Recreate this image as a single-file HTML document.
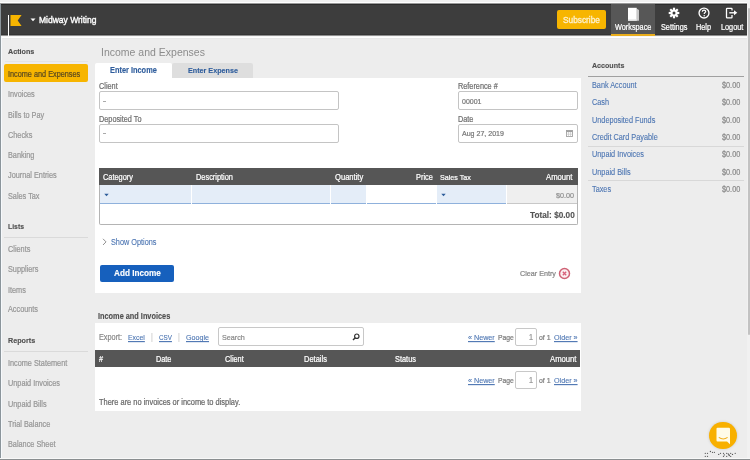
<!DOCTYPE html>
<html><head><meta charset="utf-8">
<style>
*{box-sizing:border-box;margin:0;padding:0}
html,body{width:750px;height:460px;overflow:hidden}
body{position:relative;background:#ededed;font-family:"Liberation Sans",sans-serif;font-size:7.3px;line-height:10px;color:#555}
.a{position:absolute;white-space:nowrap}
.t{position:absolute;white-space:nowrap;font-size:7.3px;line-height:10px;height:10px;margin-top:1.3px;transform:scaleY(1.12);transform-origin:0 7.6px;will-change:transform;-webkit-text-stroke:0.2px currentColor}
.b{font-weight:bold;-webkit-text-stroke:0.12px currentColor}
.si{color:#979797;left:8px}
.sh{color:#505050;font-weight:bold;font-size:7.2px;left:8px;-webkit-text-stroke:0.12px currentColor}
.w{color:#fff}
.lk{color:#4c75b2;-webkit-text-stroke:0.1px currentColor}
.ul{text-decoration:underline;text-decoration-thickness:0.6px;text-underline-offset:1.2px}
.inp{position:absolute;border:1px solid #c4c4c4;border-radius:2px;background:#fff}
.r{text-align:right}
.amt{color:#8a8a8a;right:10px;text-align:right}
</style></head><body>
<!-- top strip / header -->
<div class="a" style="left:0;top:0;width:750px;height:2px;background:#f1f1f1"></div>
<div class="a" style="left:0;top:2px;width:750px;height:1px;background:#fff"></div>
<div class="a" style="left:0;top:3px;width:750px;height:1px;background:#9a9a9a"></div>
<div class="a" style="left:0;top:4px;width:747px;height:31px;background:#3d3d3d"></div>
<div class="a" style="left:0;top:4px;width:747px;height:1px;background:#2c2c2c"></div>
<div class="a" style="left:0;top:34px;width:747px;height:1px;background:#353535"></div>
<div class="a" style="left:0;top:35px;width:750px;height:1px;background:#8f8f8f"></div>
<div class="a" style="left:0;top:36px;width:750px;height:1px;background:#f6f6f6"></div>
<div class="a" style="left:0;top:37px;width:750px;height:1px;background:#fff"></div>
<div class="a" style="left:0;top:38px;width:750px;height:1px;background:#e8e8e8"></div>
<!-- right edge strip -->
<div class="a" style="left:747px;top:0;width:3px;height:459px;background:#f1f1f1"></div>
<div class="a" style="left:748px;top:8px;width:2px;height:327px;background:#c2c2c2;border-radius:1px"></div>
<!-- left edge line -->
<div class="a" style="left:0;top:4px;width:1px;height:455px;background:#8b959b"></div>
<div class="a" style="left:1px;top:36px;width:1px;height:422px;background:#f6f9fc"></div>
<!-- bottom line -->
<div class="a" style="left:0;top:458px;width:750px;height:1px;background:#f8f8f8"></div>
<div class="a" style="left:0;top:459px;width:750px;height:1px;background:#8a8e90"></div>

<!-- logo -->
<div class="a" style="left:7.5px;top:15px;width:1.7px;height:20.5px;background:#fff"></div>
<svg class="a" style="left:10px;top:14px" width="13" height="13" viewBox="0 0 13 13"><path d="M0.5 0.9H11.6L7.7 6.5L11.6 12H0.5Z" fill="#f7b500"/></svg>
<svg class="a" style="left:30px;top:18px" width="6" height="4" viewBox="0 0 6 4"><path d="M0.5 0.5H5.5L3 3.3Z" fill="#fff"/></svg>
<div class="t w" style="left:39px;top:13.8px;font-size:8.5px;-webkit-text-stroke:0.35px #fff">Midway Writing</div>

<!-- subscribe -->
<div class="a" style="left:557px;top:10px;width:49px;height:19px;background:#f7b500;border-radius:2px"></div>
<div class="t" style="left:562.5px;top:13.4px;font-size:8.3px;color:#fdf0cc;-webkit-text-stroke:0.3px #fdf0cc">Subscribe</div>
<!-- workspace tab -->
<div class="a" style="left:611px;top:4px;width:44px;height:31px;background:#575757"></div>
<div class="a" style="left:611px;top:34px;width:44px;height:2px;background:#e9ad1c"></div>
<svg class="a" style="left:626px;top:7px" width="14" height="15" viewBox="0 0 14 15"><path d="M10.5 1.5L13 3V13.7L10.5 13.7Z" fill="#c9c9c9"/><path d="M2 0.8H10.7V13.7H2Z" fill="#fff"/><path d="M2 12.3H10.7V13.7H2Z" fill="#e6e6e6"/></svg>
<div class="t w" style="left:615px;top:21.3px">Workspace</div>
<!-- settings gear -->
<svg class="a" style="left:668px;top:7.2px" width="12" height="12" viewBox="0 0 12 12">
<g fill="#fff" transform="translate(6 6)">
<circle r="3.6"/>
<rect x="-1.1" y="-5.3" width="2.2" height="10.6"/>
<rect x="-1.1" y="-5.3" width="2.2" height="10.6" transform="rotate(45)"/>
<rect x="-1.1" y="-5.3" width="2.2" height="10.6" transform="rotate(90)"/>
<rect x="-1.1" y="-5.3" width="2.2" height="10.6" transform="rotate(135)"/>
</g><circle cx="6" cy="6" r="1.5" fill="#3d3d3d"/></svg>
<div class="t w" style="left:661px;top:21.3px">Settings</div>
<!-- help -->
<svg class="a" style="left:697.7px;top:6.7px" width="12" height="12" viewBox="0 0 12 12"><circle cx="6" cy="6" r="4.95" fill="none" stroke="#fff" stroke-width="1.35"/><path d="M4.3 4.7C4.3 3.6 5 3.1 6 3.1C7 3.1 7.7 3.7 7.7 4.5C7.7 5.5 6.2 5.6 6.2 6.9" fill="none" stroke="#fff" stroke-width="1.2"/><circle cx="6.2" cy="8.7" r="0.75" fill="#fff"/></svg>
<div class="t w" style="left:696px;top:21.3px">Help</div>
<!-- logout -->
<svg class="a" style="left:725px;top:7px" width="14" height="12" viewBox="0 0 14 12"><path d="M7 3.6V1.9Q7 1.3 6.4 1.3H2.1Q1.5 1.3 1.5 1.9V10.3Q1.5 10.9 2.1 10.9H6.4Q7 10.9 7 10.3V8" fill="none" stroke="#fff" stroke-width="1.3"/><path d="M4.3 5.8H9.6" stroke="#fff" stroke-width="1.4"/><path d="M9 3.3L12.3 5.8L9 8.3Z" fill="#fff"/></svg>
<div class="t w" style="left:720.5px;top:21.3px">Logout</div>

<!-- sidebar -->
<div class="t sh" style="top:45.8px">Actions</div>
<div class="a" style="left:5px;top:61px;width:83px;height:1px;background:#e4e4e4"></div>
<div class="a" style="left:4px;top:64px;width:84px;height:18px;background:#f7b500;border-radius:2px"></div>
<div class="t" style="left:8px;top:69px;color:#5b4a1f">Income and Expenses</div>
<div class="t si" style="top:89.2px">Invoices</div>
<div class="t si" style="top:109.3px">Bills to Pay</div>
<div class="t si" style="top:129.7px">Checks</div>
<div class="t si" style="top:149.8px">Banking</div>
<div class="t si" style="top:170.2px">Journal Entries</div>
<div class="t si" style="top:190.5px">Sales Tax</div>
<div class="t sh" style="top:221.2px;font-size:6.9px">Lists</div>
<div class="a" style="left:4px;top:237px;width:84px;height:1px;background:#dadada"></div>
<div class="t si" style="top:243.6px">Clients</div>
<div class="t si" style="top:264.1px">Suppliers</div>
<div class="t si" style="top:284.5px">Items</div>
<div class="t si" style="top:304.1px">Accounts</div>
<div class="t sh" style="top:334.4px">Reports</div>
<div class="a" style="left:4px;top:351px;width:84px;height:1px;background:#dadada"></div>
<div class="t si" style="top:357.5px">Income Statement</div>
<div class="t si" style="top:378px">Unpaid Invoices</div>
<div class="t si" style="top:398.6px">Unpaid Bills</div>
<div class="t si" style="top:418.4px">Trial Balance</div>
<div class="t si" style="top:439px">Balance Sheet</div>

<!-- main title -->
<div class="t" style="left:100.5px;top:43.4px;font-size:10.5px;line-height:14px;height:14px;color:#8c8c8c;-webkit-text-stroke:0">Income and Expenses</div>
<!-- tabs -->
<div class="a" style="left:95px;top:62.7px;width:76.5px;height:16px;background:#fff;border-radius:2px 2px 0 0"></div>
<div class="a" style="left:171.8px;top:62.7px;width:81.2px;height:15.3px;background:#dedede;border-radius:2px 2px 0 0"></div>
<div class="t b" style="left:110px;top:64.5px;font-size:7.4px;color:#2f5d9c">Enter Income</div>
<div class="t b" style="left:188px;top:64.5px;font-size:7.2px;color:#2f5d9c">Enter Expense</div>
<div class="a" style="left:95px;top:78px;width:486px;height:214.7px;background:#fff"></div>

<div class="t" style="left:99px;top:80.8px;color:#707070">Client</div>
<div class="inp" style="left:98.5px;top:91px;width:240px;height:19px"></div>
<div class="a" style="left:103px;top:100.5px;width:3px;height:1px;background:#aaa"></div>
<div class="t" style="left:99px;top:113.6px;color:#707070">Deposited To</div>
<div class="inp" style="left:98.5px;top:123.5px;width:240px;height:19px"></div>
<div class="a" style="left:103px;top:133px;width:3px;height:1px;background:#aaa"></div>
<div class="t" style="left:458px;top:80.8px;color:#707070">Reference #</div>
<div class="inp" style="left:457.5px;top:91px;width:120px;height:19px"></div>
<div class="t" style="left:462px;top:95.9px;color:#777;font-size:7px">00001</div>
<div class="t" style="left:458px;top:113.6px;color:#707070">Date</div>
<div class="inp" style="left:457.5px;top:123.5px;width:120px;height:19px"></div>
<div class="t" style="left:462px;top:127.9px;color:#777;font-size:7.06px">Aug 27, 2019</div>
<svg class="a" style="left:565.5px;top:130px" width="7" height="7" viewBox="0 0 7 7"><rect x="0.5" y="0.5" width="6" height="6" fill="none" stroke="#a0a0a0" stroke-width="0.9"/><rect x="0.5" y="0.5" width="6" height="1.6" fill="#a0a0a0"/><path d="M0.5 4.2H6.5M2.5 2V6.5M4.5 2V6.5" stroke="#bdbdbd" stroke-width="0.6"/></svg>

<!-- entry table -->
<div class="a" style="left:99px;top:167.5px;width:478.5px;height:57px;border:1px solid #b4b4b4;border-top:none;border-radius:0 0 2px 2px;background:#fff"></div>
<div class="a" style="left:99px;top:167.5px;width:478.5px;height:17px;background:#565656"></div>
<div class="t w" style="left:103px;top:171.3px;font-size:7.4px">Category</div>
<div class="t w" style="left:195.5px;top:171.3px;font-size:7.4px">Description</div>
<div class="t w" style="left:334.5px;top:171.3px;font-size:7.6px">Quantity</div>
<div class="t w" style="left:415.8px;top:171.3px;font-size:7.4px">Price</div>
<div class="t w" style="left:439.5px;top:171.3px;font-size:7.15px">Sales Tax</div>
<div class="t w" style="left:546.3px;top:171.3px;font-size:7.7px">Amount</div>

<div class="a" style="left:100px;top:185px;width:91px;height:18.5px;background:#e4edf8;border-bottom:1px solid #8fb1dc"></div>
<div class="a" style="left:192px;top:185px;width:138px;height:18.5px;background:#e4edf8;border-bottom:1px solid #8fb1dc"></div>
<div class="a" style="left:331px;top:185px;width:35px;height:18.5px;background:#e4edf8;border-bottom:1px solid #8fb1dc"></div>
<div class="a" style="left:367px;top:185px;width:69px;height:18.5px;background:#fff;border-bottom:1px solid #8fb1dc"></div>
<div class="a" style="left:437px;top:185px;width:69px;height:18.5px;background:#e4edf8;border-bottom:1px solid #8fb1dc"></div>
<div class="a" style="left:507px;top:185px;width:69.5px;height:18.5px;background:#efefef;border-bottom:1px solid #c8c8c8"></div>
<svg class="a" style="left:104px;top:193px" width="5" height="4" viewBox="0 0 5 4"><path d="M0.3 0.8H4.7L2.5 3.2Z" fill="#2c5c9a"/></svg>
<svg class="a" style="left:441px;top:193px" width="5" height="4" viewBox="0 0 5 4"><path d="M0.3 0.8H4.7L2.5 3.2Z" fill="#2c5c9a"/></svg>
<div class="t" style="left:555.8px;top:189.9px;color:#8e8e8e;font-size:7.2px">$0.00</div>
<div class="t b" style="left:529.8px;top:209.5px;color:#555;font-size:8.25px">Total: $0.00</div>

<svg class="a" style="left:102px;top:238.3px" width="5" height="8" viewBox="0 0 5 8"><path d="M1 0.8L4 3.9L1 7" fill="none" stroke="#858585" stroke-width="0.9"/></svg>
<div class="t lk" style="left:110.5px;top:237px">Show Options</div>
<div class="a" style="left:100px;top:264.5px;width:74px;height:17px;background:#1660bd;border-radius:2px"></div>
<div class="t b w" style="left:113.8px;top:268.1px;font-size:8.2px">Add Income</div>
<div class="t" style="left:520px;top:267.6px;color:#858585;font-size:7.2px">Clear Entry</div>
<svg class="a" style="left:558px;top:267px" width="13" height="13" viewBox="0 0 13 13"><circle cx="6.5" cy="6.5" r="5" fill="#fbeef0" stroke="#cf6275" stroke-width="1.5"/><path d="M4.8 4.8L8.2 8.2M8.2 4.8L4.8 8.2" stroke="#d9607a" stroke-width="1.3"/></svg>

<!-- accounts panel -->
<div class="t sh" style="left:592.3px;top:59.7px;font-size:7.1px">Accounts</div>
<div class="a" style="left:588px;top:75.5px;width:156px;height:1.5px;background:#a0a0a0"></div>
<div class="t lk" style="left:592.3px;top:80.1px">Bank Account</div>
<div class="t amt" style="top:80.1px">$0.00</div>
<div class="t lk" style="left:592.3px;top:97px">Cash</div>
<div class="t amt" style="top:97px">$0.00</div>
<div class="t lk" style="left:592.3px;top:114.4px">Undeposited Funds</div>
<div class="t amt" style="top:114.4px">$0.00</div>
<div class="t lk" style="left:592.3px;top:131.3px">Credit Card Payable</div>
<div class="t amt" style="top:131.3px">$0.00</div>
<div class="a" style="left:588px;top:145.5px;width:156px;height:1px;background:#d8d8d8"></div>
<div class="t lk" style="left:592.3px;top:149.2px">Unpaid Invoices</div>
<div class="t amt" style="top:149.2px">$0.00</div>
<div class="t lk" style="left:592.3px;top:166.4px">Unpaid Bills</div>
<div class="t amt" style="top:166.4px">$0.00</div>
<div class="a" style="left:588px;top:179.5px;width:156px;height:1px;background:#d8d8d8"></div>
<div class="t lk" style="left:592.3px;top:183.6px">Taxes</div>
<div class="t amt" style="top:183.6px">$0.00</div>

<!-- income and invoices -->
<div class="t sh" style="left:98.4px;top:311.2px;font-size:7.35px">Income and Invoices</div>
<div class="a" style="left:95px;top:323px;width:486px;height:87.5px;background:#fff"></div>
<div class="t" style="left:99px;top:331.8px;color:#8a8a8a">Export:</div>
<div class="t lk ul" style="left:128px;top:331.8px;font-size:6.9px">Excel</div>
<div class="t" style="left:150.5px;top:331.8px;color:#bbb;-webkit-text-stroke:0">|</div>
<div class="t lk ul" style="left:159px;top:331.8px;font-size:6.3px">CSV</div>
<div class="t" style="left:177.5px;top:331.8px;color:#bbb;-webkit-text-stroke:0">|</div>
<div class="t lk ul" style="left:186px;top:331.8px;font-size:7.15px">Google</div>
<div class="inp" style="left:218px;top:327px;width:146px;height:19px;border-color:#c8c8c8"></div>
<div class="t" style="left:222px;top:331.6px;color:#8a8a8a;font-size:7.2px">Search</div>
<svg class="a" style="left:352px;top:332.5px" width="8" height="8" viewBox="0 0 8 8"><circle cx="4.8" cy="3.2" r="2.2" fill="none" stroke="#333" stroke-width="1.2"/><path d="M3.3 4.7L1 7" stroke="#333" stroke-width="1.4"/></svg>
<div class="t lk ul" style="left:468.4px;top:332.2px;font-size:7.2px">« Newer</div>
<div class="t" style="left:497.6px;top:332.2px;color:#7d7d7d;font-size:6.8px">Page</div>
<div class="inp" style="left:515px;top:327.5px;width:22px;height:18.5px;border-color:#c8c8c8"></div>
<div class="t" style="left:529px;top:332.2px;color:#999">1</div>
<div class="t" style="left:539px;top:332.2px;color:#7d7d7d;font-size:6.95px">of 1</div>
<div class="t lk ul" style="left:553.6px;top:332.2px;font-size:7.2px">Older »</div>

<div class="a" style="left:95px;top:350px;width:485px;height:17px;background:#565656"></div>
<div class="t w" style="left:99.3px;top:353.3px">#</div>
<div class="t w" style="left:156.3px;top:353.3px">Date</div>
<div class="t w" style="left:224.6px;top:353.3px">Client</div>
<div class="t w" style="left:303.8px;top:353.3px;font-size:7.5px">Details</div>
<div class="t w" style="left:394.9px;top:353.3px;font-size:7.4px">Status</div>
<div class="t w" style="left:550.2px;top:353.3px;font-size:7.7px">Amount</div>

<div class="t lk ul" style="left:468.4px;top:375.1px;font-size:7.2px">« Newer</div>
<div class="t" style="left:497.6px;top:375.1px;color:#7d7d7d;font-size:6.8px">Page</div>
<div class="inp" style="left:515px;top:370.5px;width:22px;height:18.5px;border-color:#c8c8c8"></div>
<div class="t" style="left:529px;top:375.1px;color:#999">1</div>
<div class="t" style="left:539px;top:375.1px;color:#7d7d7d;font-size:6.95px">of 1</div>
<div class="t lk ul" style="left:553.6px;top:375.1px;font-size:7.2px">Older »</div>

<div class="t" style="left:99px;top:396.6px;color:#6a6a6a;font-size:7.45px">There are no invoices or income to display.</div>

<!-- chat bubble -->
<div class="a" style="left:709.3px;top:421.6px;width:27.4px;height:27.4px;border-radius:50%;background:#f8b000;box-shadow:0 0 3px rgba(0,0,0,0.15)"></div>
<svg class="a" style="left:716px;top:427px" width="15" height="18" viewBox="0 0 15 18"><path d="M1.5 0.8H12.9Q14 0.8 14 1.9V17.2L11 14.5H1.5Q0.5 14.5 0.5 13.5V1.8Q0.5 0.8 1.5 0.8Z" fill="#fffbe8"/><path d="M2.8 10.4Q7.2 13.6 11.6 10.4" fill="none" stroke="#f2b01e" stroke-width="1.1"/></svg>
<svg class="a" style="left:700px;top:448px" width="40" height="10" viewBox="0 0 40 10" fill="#555"><circle cx="5.3" cy="5.3" r="0.65"/><circle cx="7.5" cy="5.3" r="0.65"/><circle cx="5.3" cy="8.3" r="0.65"/><circle cx="7.5" cy="8.3" r="0.65"/><circle cx="10.4" cy="3.5" r="0.65"/><circle cx="12.5" cy="4.3" r="0.65"/><circle cx="14.4" cy="4.3" r="0.65"/><circle cx="18.7" cy="6.4" r="0.65"/><circle cx="20.5" cy="5.3" r="0.65"/><circle cx="23.5" cy="5.3" r="0.65"/><circle cx="24.3" cy="6.9" r="0.65"/><circle cx="23.5" cy="8.3" r="0.65"/><circle cx="26.7" cy="5.3" r="0.65"/><circle cx="28.8" cy="6.7" r="0.65"/><circle cx="30.7" cy="5.3" r="0.65"/><circle cx="26.7" cy="8.3" r="0.65"/><circle cx="30.7" cy="8.3" r="0.65"/><circle cx="29.3" cy="7.5" r="0.65"/><circle cx="28.2" cy="5.8" r="0.65"/><circle cx="32.5" cy="6.4" r="0.65"/><circle cx="35.2" cy="5.3" r="0.65"/></svg>
</body></html>
